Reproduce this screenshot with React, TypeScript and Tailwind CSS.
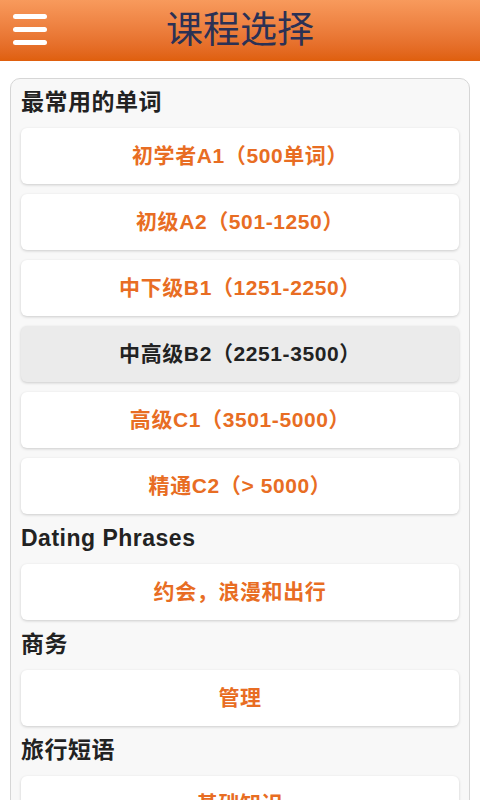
import React from 'react';

type Course = {
  label: string;
  active?: boolean;
};

type Section = {
  title: string;
  courses: Course[];
};

const sections: Section[] = [
  {
    title: '最常用的单词',
    courses: [
      { label: '初学者A1（500单词）' },
      { label: '初级A2（501-1250）' },
      { label: '中下级B1（1251-2250）' },
      { label: '中高级B2（2251-3500）', active: true },
      { label: '高级C1（3501-5000）' },
      { label: '精通C2（> 5000）' },
    ],
  },
  {
    title: 'Dating Phrases',
    courses: [{ label: '约会，浪漫和出行' }],
  },
  {
    title: '商务',
    courses: [{ label: '管理' }],
  },
  {
    title: '旅行短语',
    courses: [{ label: '基础知识' }, { label: '交通' }],
  },
];

const font = "font-['Liberation_Sans','Noto_Sans_CJK_SC',sans-serif]";

const App = () => {
  return (
    <div className={`min-h-screen bg-white ${font}`}>
      {/* Header */}
      <header className="h-[61px] flex items-center relative bg-gradient-to-b from-[#f89a5c] to-[#df5f0c]">
        <button className="absolute left-[13px] top-[14px] w-[34px] flex flex-col gap-[8px]">
          <span className="block h-[5px] rounded-full bg-white" />
          <span className="block h-[5px] rounded-full bg-white" />
          <span className="block h-[5px] rounded-full bg-white" />
        </button>
        <h1 className="w-full text-center text-[37px] leading-none text-[#2b3155] font-normal">
          课程选择
        </h1>
      </header>

      {/* Course list */}
      <div className="mx-[10px] mt-[17px] border border-[#d6d6d6] rounded-[10px] bg-[#f8f8f8] px-[10px] pt-[9px] pb-[10px]">
        {sections.map((section) => (
          <div key={section.title}>
            <div className="text-[23px] leading-[28px] font-bold tracking-[0.5px] text-[#222] mb-[12px]">
              {section.title}
            </div>
            {section.courses.map((course) => (
              <div
                key={course.label}
                className={`h-[56px] mb-[10px] rounded-[6px] flex items-center justify-center text-[21px] font-bold tracking-[0.6px] shadow-[0_1px_3px_rgba(0,0,0,0.18)] ${
                  course.active ? 'bg-[#ebebeb] text-[#222]' : 'bg-white text-[#e86d23]'
                }`}
              >
                {course.label}
              </div>
            ))}
          </div>
        ))}
      </div>
    </div>
  );
};

export default App;
